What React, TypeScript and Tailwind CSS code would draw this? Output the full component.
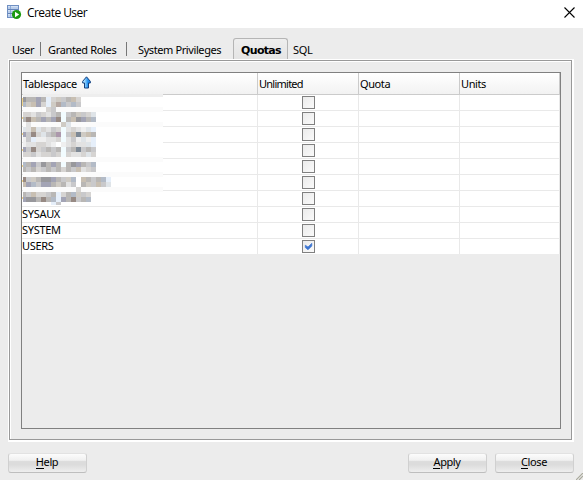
import type { ReactNode } from 'react';

const COLORS: Record<string, string> = {
  a: '#98989c', b: '#a3a4b5', c: '#b9b7b5', d: '#c9c9cb', e: '#d6d4d2', f: '#e2e2e2',
  g: '#efefef', h: '#c8bfb2', i: '#978a84', j: '#ac98ac', k: '#e6effa', l: '#7e8995',
  m: '#b3bbc7', n: '#cfcbc4', o: '#dfe4e8', p: '#f2fcff', q: '#b5a8a2', r: '#fbfbfb', w: '#ffffff',
};

// One character per mosaic cell; the first column is clipped to 3px.
const MOSAIC = [
  'accbckendche',
  'mnhbeknqmdmd',
  'rrrrredrrrrrrrr',
  'eefdefdcpdcndeo',
  'cihcbcbipchabcm',
  'rfrrrrrrnorrrrr',
  'ofhoefdepfefgok',
  'bdieodcjpdhlnhc',
  'gdkggffepfdgogk',
  'gffeefgwgfeffok',
  'bdiedcdcpdcldcd',
  'eedfeedepeffeoe',
  'rrrrrrrrrrrrrrr',
  'mcbdacbcpcabcdm',
  'cdcedcdcecdhfed',
  'rrrrrrrrrrrrrrr',
  'idncaabcdnmwhcdcmk',
  'hbmdbbcncfdwcndhdo',
  'rrrrrrrrrrrerrrrr',
  'cdheedckecmnde',
  'baacicmkbcidcm',
  'wwwwwwkdwwwwww',
];

function Mosaic() {
  return (
    <svg className="block" width="141" height="108" shapeRendering="crispEdges">
      <rect x="1" width="140" height="108" fill="#fff" />
      {[10, 25, 60, 75, 90].map((y) => (
        <rect key={y} x="1" y={y} width="140" height="5" fill="#fbfbfb" />
      ))}
      {[1, 20, 36, 52, 68, 83, 100].map((y) => (
        <rect key={y} y={y} width="1" height={y === 1 ? 8 : 2} fill="#f0d48a" />
      ))}
      {MOSAIC.map((row, r) =>
        row.split('').map((c, i) => (
          <rect
            key={`${r}-${i}`}
            x={i === 0 ? 1 : 4 + (i - 1) * 5}
            y={r * 5}
            width={i === 0 ? 3 : 5}
            height={r === 21 ? 3 : 5}
            fill={COLORS[c]}
          />
        )),
      )}
    </svg>
  );
}

function AppIcon() {
  return (
    <svg width="15" height="15" viewBox="0 0 15 15">
      <rect x="0.5" y="0.5" width="11" height="12" fill="#b9cdea" stroke="#6f8fc2" />
      <path d="M1 4.5h10M1 8.5h10" stroke="#6384ba" />
      <path d="M1 1.5h10M1 5.5h10M1 9.5h10" stroke="#d3e1f4" />
      <path d="M3.5 1v3M3.5 5v3M3.5 9v3" stroke="#8eabd8" />
      <circle cx="9.5" cy="9.5" r="4.6" fill="#1c9a10" />
      <path d="M8 6.7v5.6l4.2-2.8z" fill="#fff" />
    </svg>
  );
}

function SortArrow() {
  return (
    <svg width="9" height="13" viewBox="0 0 9 13">
      <defs>
        <linearGradient id="arrow">
          <stop offset="0.2" stopColor="#a9e0ff" />
          <stop offset="0.7" stopColor="#1e8df0" />
        </linearGradient>
      </defs>
      <path d="M4.5 0.8 8.3 5.3V7H6.5v5h-4V7H0.7V5.3z" fill="url(#arrow)" stroke="#163f7c" />
    </svg>
  );
}

function Checkbox({ checked }: { checked: boolean }) {
  return (
    <span className="flex size-[13px] items-center justify-center border border-[#808080] bg-linear-to-br from-[#ebebeb] to-[#fafafa]">
      {checked && (
        <svg width="9" height="9" viewBox="0 0 9 9">
          <path d="M1.3 3.2v2.3L4 7.8 7.8 4V1.3L4 5z" fill="#3e76d1" stroke="#3e76d1" strokeWidth="0.7" />
        </svg>
      )}
    </span>
  );
}

function Button({ letter, rest }: { letter: string; rest: string }) {
  return (
    <button className="flex h-[20px] w-[79px] items-start justify-center rounded-[3px] border border-[#d0d0d0] border-t-[#e2e2e2] border-b-[#bebebe] bg-[linear-gradient(to_bottom,#fcfcfc_0%,#f0f0f0_35%,#dcdcdc_42%,#dcdcdc_60%,#eeeeee_100%)] pt-px">
      <span className="pr-px tracking-[-0.4px]">
        <span className="inline-block h-[14px] border-b border-black">{letter}</span>
        {rest}
      </span>
    </button>
  );
}

function Header({ width, children }: { width: string; children: ReactNode }) {
  return (
    <div className={`${width} flex h-full items-center whitespace-nowrap border-r border-[#cbcbcb] pl-px`}>
      {children}
    </div>
  );
}

const ROWS = ['', '', '', '', '', '', '', 'SYSAUX', 'SYSTEM', 'USERS'];

export default function App() {
  return (
    <div className="flex h-[480px] w-[583px] flex-col overflow-hidden bg-[#ececec] font-['Noto_Sans','Open_Sans',sans-serif] text-[11px] leading-[14px] text-black">
      <header className="flex h-[28px] shrink-0 items-start bg-white pl-[7px] pt-[5px]">
        <AppIcon />
        <span className="ml-[5px] font-['Open_Sans',sans-serif] text-[12px] leading-[16px] tracking-[-0.55px]">Create User</span>
        <svg className="ml-auto mr-[8px] mt-[2px]" width="11" height="11" viewBox="0 0 11 11">
          <path d="M0.5 0.5l10 10M10.5 0.5l-10 10" stroke="#000" strokeWidth="1.1" />
        </svg>
      </header>

      <nav className="flex h-[31px] shrink-0 items-end whitespace-nowrap pl-[12px]">
        <span className="mb-[2px] w-[28px] tracking-[-0.5px]">User</span>
        <span className="mb-[3px] h-[14px] w-px bg-[#777]" />
        <span className="mb-[2px] ml-[7px] w-[78px] tracking-[-0.35px]">Granted Roles</span>
        <span className="mb-[3px] h-[14px] w-px bg-[#777]" />
        <span className="mb-[2px] ml-[11px] w-[95px] tracking-[-0.4px]">System Privileges</span>
        <span className="flex h-[21px] w-[55px] items-center justify-center rounded-t-[3px] border border-b-0 border-[#b5b5b5] bg-linear-to-b from-[#eeeeee] to-[#e4e4e4] pl-px pt-[3px] font-['DejaVu_Sans',sans-serif] font-bold tracking-[-0.7px]">
          Quotas
        </span>
        <span className="mb-[2px] ml-[5px] tracking-[-0.3px]">SQL</span>
      </nav>

      <section className="ml-[8px] h-[383px] w-[566px] shrink-0 border border-r-2 border-b-2 border-white">
        <div className="h-full border border-[#999]">
          <div className="h-full border-l border-t border-white pl-[10px] pt-[10px]">
            <div className="h-[357px] w-[540px] border border-[#808080]">
              <div className="flex h-[22px] border-b border-[#cbcbcb] bg-linear-to-b from-white to-[#f2f2f2]">
                <Header width="w-[236px]">
                  <span className="mr-[5px] tracking-[-0.3px]">Tablespace</span>
                  <span className="mb-[3px]"><SortArrow /></span>
                </Header>
                <Header width="w-[101px]"><span className="tracking-[-0.75px]">Unlimited</span></Header>
                <Header width="w-[101px]"><span className="tracking-[-0.4px]">Quota</span></Header>
                <Header width="w-[100px]"><span className="tracking-[-0.4px]">Units</span></Header>
              </div>
              <div className="relative">
                {ROWS.map((name, i) => (
                  <div key={i} className={`flex h-[16px] border-b bg-white ${i === 9 ? 'border-[#ececec]' : 'border-[#e9e9e9]'}`}>
                    <div className="w-[236px] border-r border-[#e9e9e9] tracking-[-0.3px]">{name}</div>
                    <div className="flex w-[101px] items-center justify-center border-r border-[#e9e9e9]">
                      <Checkbox checked={name === 'USERS'} />
                    </div>
                    <div className="w-[101px] border-r border-[#e9e9e9]" />
                    <div className="w-[100px] border-r border-[#e9e9e9]" />
                  </div>
                ))}
                <div className="absolute left-px top-[-1px] h-[3px] w-[140px] bg-[#eeeeee]" />
                <div className="absolute left-0 top-[2px]"><Mosaic /></div>
              </div>
            </div>
          </div>
        </div>
      </section>

      <footer className="relative mt-[11px] flex shrink-0 pl-[8px]">
        <Button letter="H" rest="elp" />
        <div className="ml-auto mr-[9px] flex gap-[8px]">
          <Button letter="A" rest="pply" />
          <Button letter="C" rest="lose" />
        </div>
        <svg className="absolute right-0 top-[20px]" width="7" height="7" viewBox="0 0 7 7">
          <path d="M0 7 7 0M3 7 7 3" stroke="#a9a99c" strokeWidth="1.2" />
        </svg>
      </footer>
    </div>
  );
}
